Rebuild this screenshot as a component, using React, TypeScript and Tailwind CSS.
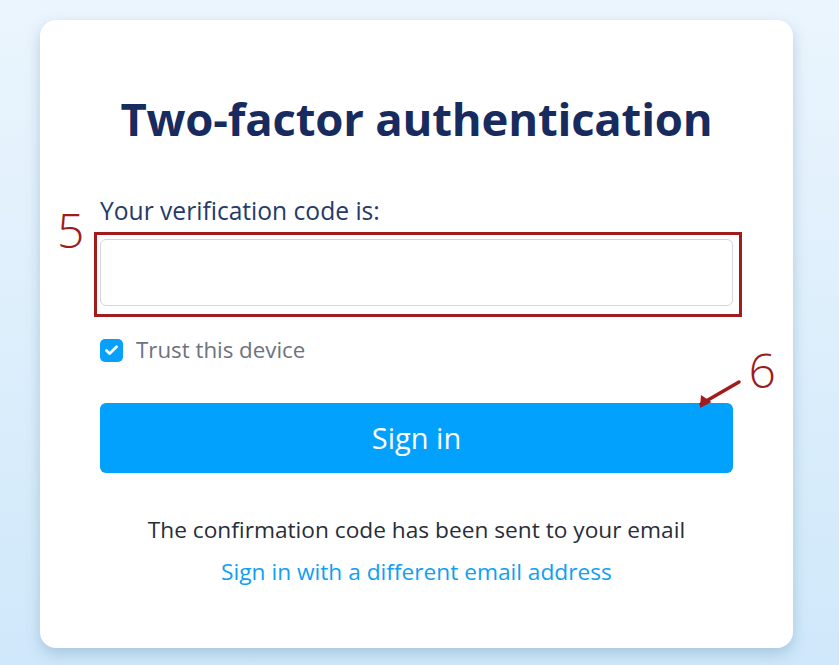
import { Check } from "lucide-react";

export default function App() {
  return (
    <div
      className="min-h-screen w-full bg-gradient-to-b from-[#ebf5fd] to-[#cfe8fa] pt-[20px] pb-[17px]"
      style={{ fontFamily: '"Open Sans", "Noto Sans", sans-serif' }}
    >
      <div className="relative mx-[40px] w-[753px] h-[628px] rounded-[16px] bg-white shadow-[0_6px_14px_rgba(120,160,190,0.45)] px-[60px] pt-[66px]">
        <h1 className="text-center text-[45.5px] font-bold leading-[64px] text-[#172b5f] tracking-[-0.2px]">
          Two-factor authentication
        </h1>

        <label className="mt-[46px] block text-[24.6px] leading-[30px] text-[#253a6a]">
          Your verification code is:
        </label>

        <div className="relative mt-[13px]">
          <span className="absolute -left-[43px] -top-[33px] text-[48px] font-light leading-none text-[#9d1c1c]">
            5
          </span>
          <input
            type="text"
            className="block h-[67px] w-full rounded-[6px] border border-[#d3d6dc] bg-white px-4 outline-none"
          />
          <div className="pointer-events-none absolute -left-[6px] -top-[7px] -right-[9px] -bottom-[11px] border-[3px] border-[#a11c1c]" />
        </div>

        <div className="mt-[29px] flex items-center gap-[13px]">
          <span className="flex h-[23px] w-[23px] items-center justify-center rounded-[5px] bg-[#08a0fb]">
            <Check className="h-[15px] w-[15px] text-white" strokeWidth={4.5} />
          </span>
          <span className="text-[22.3px] leading-[30px] text-[#6d7380]">Trust this device</span>
        </div>

        <div className="relative mt-[38px]">
          <button className="block h-[70px] w-full rounded-[6px] bg-[#02a1fe] text-[29px] text-white">
            Sign in
          </button>
          <span className="absolute -right-[43px] -top-[57px] text-[48px] font-light leading-none text-[#9d1c1c]">
            6
          </span>
          <svg
            className="absolute -right-[10px] -top-[24px]"
            width="50"
            height="32"
            viewBox="0 0 50 32"
          >
            <path d="M46 3 L8 25" stroke="#a11c1c" strokeWidth="3.5" strokeLinecap="round" fill="none" />
            <path d="M5 27 L12 16 L18 27 Z" fill="#a11c1c" transform="rotate(-28 10 24)" />
          </svg>
        </div>

        <p className="mt-[42px] text-center text-[22.7px] leading-[30px] text-[#282d3a]">
          The confirmation code has been sent to your email
        </p>
        <p className="mt-[12px] text-center text-[22.7px] leading-[30px]">
          <a href="#" className="text-[#0ea0f2]">
            Sign in with a different email address
          </a>
        </p>
      </div>
    </div>
  );
}
